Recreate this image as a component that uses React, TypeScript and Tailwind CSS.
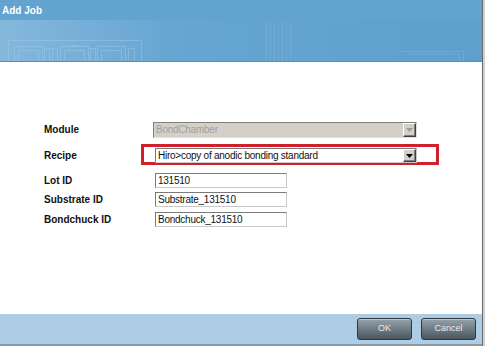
import React from 'react';

const font = { fontFamily: '"Liberation Sans", Arial, sans-serif' };

const HeaderPattern: React.FC = () => (
  <svg className="absolute inset-0" width="483" height="42" viewBox="0 0 483 42">
    <defs>
      <linearGradient id="fade" x1="0" x2="1" y1="0" y2="0">
        <stop offset="0" stopColor="#ffffff" stopOpacity="0.16" />
        <stop offset="1" stopColor="#ffffff" stopOpacity="0" />
      </linearGradient>
    </defs>
    <rect x="0" y="0" width="170" height="42" fill="url(#fade)" />
    <g fill="none" stroke="#9fcbea" strokeOpacity="0.45" strokeWidth="1">
      <rect x="8.5" y="20.5" width="133" height="30" />
      <rect x="14.5" y="26.5" width="28" height="30" />
      <rect x="18.5" y="30.5" width="20" height="30" />
      <rect x="44.5" y="28.5" width="5" height="30" />
      <rect x="52.5" y="28.5" width="5" height="30" />
      <rect x="60.5" y="26.5" width="28" height="30" />
      <rect x="64.5" y="30.5" width="20" height="30" />
      <rect x="90.5" y="28.5" width="5" height="30" />
      <rect x="97.5" y="26.5" width="28" height="30" />
      <rect x="101.5" y="30.5" width="20" height="30" />
      <rect x="128.5" y="28.5" width="6" height="30" />
      <line x1="70" y1="25.5" x2="78" y2="25.5" />
    </g>
    <g fill="none" stroke="#8cbfe3" strokeOpacity="0.3" strokeWidth="1">
      <line x1="266.5" y1="2" x2="266.5" y2="42" />
      <line x1="270.5" y1="2" x2="270.5" y2="42" />
      <line x1="274.5" y1="2" x2="274.5" y2="42" />
      <line x1="278.5" y1="6" x2="278.5" y2="42" />
      <line x1="282.5" y1="2" x2="282.5" y2="42" />
      <line x1="286.5" y1="2" x2="286.5" y2="42" />
      <line x1="290.5" y1="2" x2="290.5" y2="42" />
      <path d="M400 31.5 H463.5 V42" />
      <path d="M408 34.5 H459.5 V42" />
    </g>
  </svg>
);

const DropButton: React.FC<{ disabled?: boolean }> = ({ disabled }) => (
  <div className="w-[13px] h-full flex items-center justify-center bg-[#d4d0c8] border-l border-t border-white border-r border-b border-r-[#404040] border-b-[#404040] shadow-[inset_-1px_-1px_0_#808080]">
    <svg width="7" height="4" viewBox="0 0 7 4">
      <path d="M0 0 H7 L3.5 4 Z" fill={disabled ? '#9a9a9a' : '#000'} />
    </svg>
  </div>
);

const TextBox: React.FC<{ value: string }> = ({ value }) => (
  <div className="w-[132px] h-[15px] bg-white border border-t-[#7a7a7a] border-l-[#7a7a7a] border-r-[#c8c8c8] border-b-[#c8c8c8] flex items-center pl-[2px] text-[10px] tracking-[-0.25px] text-[#111] leading-none whitespace-nowrap">
    {value}
  </div>
);

const Label: React.FC<{ children: React.ReactNode }> = ({ children }) => (
  <div className="w-[155px] shrink-0 pl-[44px] text-[10px] font-bold text-[#111] leading-none whitespace-nowrap">{children}</div>
);

const Btn: React.FC<{ children: React.ReactNode }> = ({ children }) => (
  <button className="w-[55px] h-[22px] rounded-[3px] border border-[#2f363c] bg-gradient-to-b from-[#95a3ad] via-[#6f7c86] to-[#4b565e] text-[9px] text-[#e6edf2] shadow-[inset_0_1px_0_#b8c4cc]">
    {children}
  </button>
);

export default function App() {
  return (
    <div className="w-[485px] h-[346px] flex bg-[#d0d0d0] overflow-hidden" style={font}>
      <div className="w-[483px] h-full flex flex-col border-r border-[#6a6a6a]">
        <div className="h-[20px] bg-[#62a3d0] flex items-center pl-[2px] text-[10px] font-bold text-white">Add Job</div>
        <div className="relative h-[42px] bg-gradient-to-r from-[#6eaad6] via-[#64a4d1] to-[#5f9fcd] border-b border-[#5590bd] overflow-hidden">
          <HeaderPattern />
        </div>
        <div className="flex-1 bg-white flex flex-col pt-[60px]">
          <div className="flex items-center h-[16px]">
            <Label>Module</Label>
            <div className="-ml-[2px] w-[264px] h-[16px] flex bg-[#d4d0c8] border border-t-[#808080] border-l-[#808080] border-r-[#e0e0e0] border-b-[#e0e0e0]">
              <div className="flex-1 flex items-center pl-[2px] text-[10px] tracking-[-0.25px] text-[#a0a0a0] leading-none">BondChamber</div>
              <DropButton disabled />
            </div>
          </div>
          <div className="flex items-center h-[15px] mt-[10px]">
            <Label>Recipe</Label>
            <div className="relative">
              <div className="absolute left-[-14px] top-[-4px] w-[298px] h-[21px] border-[3px] border-[#d0202c]" />
              <div className="relative w-[262px] h-[15px] flex bg-white border border-t-[#7a7a7a] border-l-[#7a7a7a] border-r-[#c8c8c8] border-b-[#c8c8c8]">
                <div className="flex-1 flex items-center pl-[2px] text-[10px] tracking-[-0.25px] text-[#111] leading-none whitespace-nowrap">Hiro&gt;copy of anodic bonding standard</div>
                <DropButton />
              </div>
            </div>
          </div>
          <div className="flex items-center h-[15px] mt-[10px]">
            <Label>Lot ID</Label>
            <TextBox value="131510" />
          </div>
          <div className="flex items-center h-[15px] mt-[4px]">
            <Label>Substrate ID</Label>
            <TextBox value="Substrate_131510" />
          </div>
          <div className="flex items-center h-[15px] mt-[5px]">
            <Label>Bondchuck ID</Label>
            <TextBox value="Bondchuck_131510" />
          </div>
        </div>
        <div className="h-[32px] bg-[#aecde4] border-b-2 border-[#8a9aa6] flex items-start justify-end gap-[9px] pt-[4px] pr-[6px]">
          <Btn>OK</Btn>
          <Btn>Cancel</Btn>
        </div>
      </div>
    </div>
  );
}
